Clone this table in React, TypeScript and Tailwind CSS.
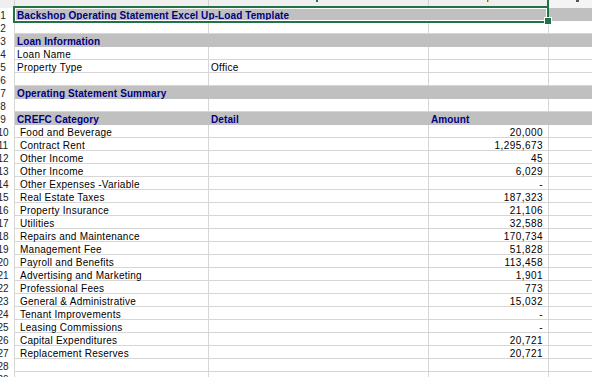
import React from "react";

type Row = { a?: string; b?: string; c?: string; gray?: boolean; bold?: boolean; indent?: boolean; span?: boolean };

const items: [string, string][] = [
  ["Food and Beverage", "20,000"],
  ["Contract Rent", "1,295,673"],
  ["Other Income", "45"],
  ["Other Income", "6,029"],
  ["Other Expenses -Variable", "-"],
  ["Real Estate Taxes", "187,323"],
  ["Property Insurance", "21,106"],
  ["Utilities", "32,588"],
  ["Repairs and Maintenance", "170,734"],
  ["Management Fee", "51,828"],
  ["Payroll and Benefits", "113,458"],
  ["Advertising and Marketing", "1,901"],
  ["Professional Fees", "773"],
  ["General & Administrative", "15,032"],
  ["Tenant Improvements", "-"],
  ["Leasing Commissions", "-"],
  ["Capital Expenditures", "20,721"],
  ["Replacement Reserves", "20,721"],
];

const rows: Row[] = [
  { a: "Backshop Operating Statement Excel Up-Load Template", gray: true, bold: true, span: true },
  {},
  { a: "Loan Information", gray: true, bold: true },
  { a: "Loan Name" },
  { a: "Property Type", b: "Office" },
  {},
  { a: "Operating Statement Summary", gray: true, bold: true },
  {},
  { a: "CREFC Category", b: "Detail", c: "Amount", gray: true, bold: true },
  ...items.map(([a, c]) => ({ a, c, indent: true })),
  {},
  {},
];

export default function App() {
  return (
    <div
      className="relative w-[592px] h-[377px] overflow-hidden bg-white text-[10px] text-black"
      style={{ fontFamily: '"Liberation Sans", Arial, sans-serif' }}
    >
      <div className="grid grid-cols-[15px_194px_220px_120px_1fr] grid-rows-[8px] auto-rows-[13px]">
        {/* column header strip */}
        <div className="bg-[#efefef] border-r border-[#d0d0d0]" />
        <div className="bg-[#efefef] border-r border-[#d0d0d0]" />
        <div className="relative bg-[#efefef] border-r border-[#d0d0d0]">
          <span className="absolute left-[107px] top-0 w-[2px] h-[2px] bg-[#217346]" />
        </div>
        <div className="relative bg-[#efefef] border-r-2 border-[#217346]">
          <span className="absolute left-[58px] top-0 w-[1px] h-[2px] bg-[#1f8f7a]" />
          <span className="absolute left-[59px] top-0 w-[1px] h-[2px] bg-[#d9c04a]" />
        </div>
        <div className="relative bg-[#f4f4f4]">
          <span className="absolute left-[27px] top-0 w-[3px] h-[2px] bg-[#555]" />
        </div>
        {rows.map((r, i) => {
          const n = i + 1;
          const cellBase = "h-[13px] border-b border-r leading-[15px] whitespace-nowrap";
          const cell = r.gray
            ? `${cellBase} bg-[#c0c0c0] border-[#c0c0c0]`
            : `${cellBase} border-[#d6d6d6]`;
          const txt = r.bold ? "font-bold text-[#000080] tracking-[0.1px]" : "tracking-[0.25px]";
          return (
            <React.Fragment key={n}>
              <div className="h-[13px] border-r border-[#d6d6d6] overflow-hidden leading-[15px] text-[#222]">
                <div className="w-[22px] ml-[-8px] text-center">{n}</div>
              </div>
              {r.span ? (
                <div className={`col-span-3 ${cell} pl-[2px] ${txt}`}>{r.a}</div>
              ) : (
                <>
                  <div className={`${cell} ${r.indent ? "pl-[5px]" : "pl-[2px]"} ${txt}`}>{r.a}</div>
                  <div className={`${cell} pl-[2px] ${txt}`}>{r.b}</div>
                  <div
                    className={`${cell} ${
                      r.bold ? `pl-[2px] text-left ${txt}` : "pr-[5px] text-right tracking-[0.45px]"
                    }`}
                  >
                    {r.c}
                  </div>
                </>
              )}
              <div className={r.gray ? "h-[13px] bg-[#c0c0c0]" : "h-[13px] border-b border-[#d6d6d6]"} />
            </React.Fragment>
          );
        })}
      </div>

      {/* selection */}
      <div className="absolute left-[13px] top-[6px] w-[536px] h-[17px] border-2 border-[#217346] shadow-[inset_0_0_0_1px_#ffffff]" />
      <div className="absolute left-[545px] top-[18px] w-[6px] h-[6px] bg-[#217346] ring-1 ring-white" />
    </div>
  );
}
